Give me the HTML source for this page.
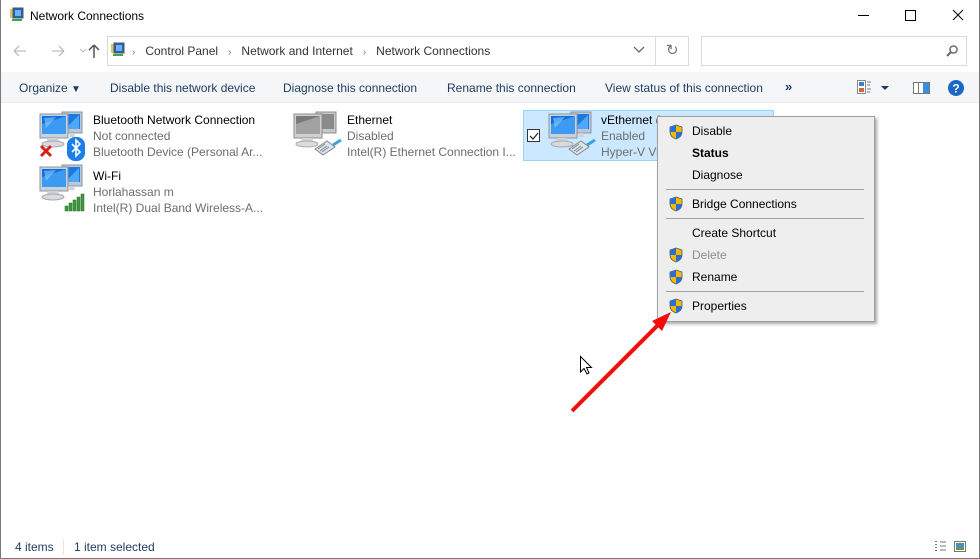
<!DOCTYPE html>
<html><head><meta charset="utf-8"><style>
*{margin:0;padding:0;box-sizing:border-box}
body{width:980px;height:559px;overflow:hidden;background:#fff;font-family:"Segoe UI","Liberation Sans",sans-serif;font-size:12px;color:#000;position:relative}
.a{position:absolute;white-space:nowrap}
.g{color:#6d6d6d}
.menu{position:absolute;left:657px;top:116px;width:218px;height:206px;background:#eeeeee;border:1px solid #a0a0a0;box-shadow:2px 2px 3px rgba(0,0,0,.35)}
.mi{position:absolute;left:34px;font-size:12px}
.sep{position:absolute;left:8px;right:10px;height:1px;background:#a0a0a0}
.sh{position:absolute;left:10px}
</style></head><body>
<svg width="0" height="0" style="position:absolute"><defs>
<symbol id="mon" viewBox="0 0 48 48">
<rect x="24" y="2" width="20" height="21" fill="#bcc8d6" stroke="#8a96a4"/>
<rect x="26" y="4" width="16" height="15" fill="#1a7ae0"/>
<path d="M27 19 L41 5 L41 19Z" fill="#4ea8f5"/>
<rect x="2" y="4" width="28" height="24" fill="#c9d2dc" stroke="#8a96a4"/>
<rect x="4" y="6" width="24" height="18" fill="#0d6fdd"/>
<path d="M4 24 L4 14 Q16 10 28 6 L28 24Z" fill="#3c9af0"/>
<path d="M6 8 L18 7 L8 18Z" fill="#8ecbff" opacity=".6"/>
<path d="M10 28 L20 28 L22 33 L8 33Z" fill="#cfd3d8"/>
<ellipse cx="15" cy="34" rx="11" ry="3" fill="#d8dadd" stroke="#a6a9ad"/>
<path d="M32 23 L36 23 L37 27 L31 27Z" fill="#cfd3d8"/>
</symbol>
<symbol id="mong" viewBox="0 0 48 48">
<rect x="24" y="2" width="20" height="21" fill="#c8c8c8" stroke="#8c8c8c"/>
<rect x="26" y="4" width="16" height="15" fill="#8a8a8a"/>
<rect x="2" y="4" width="28" height="24" fill="#d0d0d0" stroke="#8c8c8c"/>
<rect x="4" y="6" width="24" height="18" fill="#7a7a7a"/>
<path d="M4 24 L4 14 Q16 10 28 6 L28 24Z" fill="#a2a2a2"/>
<path d="M10 28 L20 28 L22 33 L8 33Z" fill="#d3d3d3"/>
<ellipse cx="15" cy="34" rx="11" ry="3" fill="#dcdcdc" stroke="#aaa"/>
</symbol>
<symbol id="plug" viewBox="0 0 30 20">
<path d="M2 12 L14 4 L22 10 L10 18Z" fill="#dfe4e8" stroke="#7f8a93"/>
<path d="M5 12 L12 7 M7 14 L14 9 M9 15 L16 10" stroke="#7f8a93"/>
<path d="M20 8 L28 3" stroke="#3aa3e0" stroke-width="3"/>
</symbol>
<symbol id="shield" viewBox="0 0 16 16">
<path d="M8 1 L14 3 L14 8 Q14 13 8 15 Q2 13 2 8 L2 3Z" fill="#f5b800" stroke="#4a5a6a" stroke-width=".8"/>
<path d="M8 1 L8 8 L2 8 L2 3Z" fill="#2d6fd1"/>
<path d="M8 8 L14 8 Q14 13 8 15Z" fill="#2d6fd1"/>
</symbol>
</defs></svg>

<!-- title bar -->
<svg class="a" style="left:9px;top:7px" width="16" height="16" viewBox="0 0 16 16"><rect x="1" y="2" width="9" height="9" fill="#e8c35a"/><rect x="4" y="1" width="10" height="10" fill="#1b62c4" stroke="#555"/><rect x="6" y="3" width="6" height="6" fill="#6fb0f0"/><rect x="3" y="12" width="10" height="2" fill="#3aa84a"/></svg>
<div class="a" style="left:30px;top:9px;font-size:12px">Network Connections</div>
<svg class="a" style="left:858px;top:8px" width="110" height="16"><path d="M0 7.5 H11" stroke="#000"/><rect x="47.5" y="2.5" width="10" height="10" fill="none" stroke="#000"/><path d="M95 2 L105 12 M105 2 L95 12" stroke="#000"/></svg>

<!-- nav -->
<svg class="a" style="left:10px;top:42px" width="95" height="18"><path d="M4 9 H16 M4 9 L9 4 M4 9 L9 14" stroke="#bdbdbd" stroke-width="1.3" fill="none"/><path d="M42 9 H54 M54 9 L49 4 M54 9 L49 14" stroke="#bdbdbd" stroke-width="1.3" fill="none"/><path d="M70 7 L73 10 L76 7" stroke="#bdbdbd" fill="none"/><path d="M84 16 V3 M84 3 L79 8 M84 3 L89 8" stroke="#555" stroke-width="1.5" fill="none"/></svg>
<div class="a" style="left:107px;top:36px;width:582px;height:30px;border:1px solid #d9d9d9"></div>
<div class="a" style="left:655px;top:36px;width:1px;height:30px;background:#d9d9d9"></div>
<svg class="a" style="left:110px;top:42px" width="16" height="16" viewBox="0 0 16 16"><rect x="1" y="2" width="9" height="9" fill="#e8c35a"/><rect x="4" y="1" width="10" height="10" fill="#1b62c4" stroke="#555"/><rect x="6" y="3" width="6" height="6" fill="#6fb0f0"/><rect x="3" y="12" width="10" height="2" fill="#3aa84a"/></svg>
<div class="a" style="left:132px;top:44px;font-size:12px;color:#333"><span style="color:#777;font-size:10px">›</span>&nbsp;&nbsp;&nbsp;Control Panel&nbsp;&nbsp;&nbsp;<span style="color:#777;font-size:10px">›</span>&nbsp;&nbsp;&nbsp;Network and Internet&nbsp;&nbsp;&nbsp;<span style="color:#777;font-size:10px">›</span>&nbsp;&nbsp;&nbsp;Network Connections</div>
<svg class="a" style="left:633px;top:46px" width="12" height="8"><path d="M1 1 L6 6 L11 1" stroke="#666" stroke-width="1.3" fill="none"/></svg>
<div class="a" style="left:666px;top:41px;font-size:15px;color:#777">↻</div>
<div class="a" style="left:701px;top:36px;width:266px;height:30px;border:1px solid #d9d9d9"></div>
<svg class="a" style="left:945px;top:44px" width="14" height="14"><circle cx="8.5" cy="5.5" r="3.6" stroke="#666" stroke-width="1.4" fill="none"/><path d="M6 8 L2 12" stroke="#666" stroke-width="2"/></svg>

<!-- toolbar -->
<div class="a" style="left:1px;top:72px;width:978px;height:31px;background:#f4f6f8;border-bottom:1px solid #e8ebee"></div>
<div class="a" style="left:19px;top:81px;color:#1e3a5f">Organize <span style="font-size:10px">▼</span></div>
<div class="a" style="left:110px;top:81px;color:#1e3a5f">Disable this network device</div>
<div class="a" style="left:283px;top:81px;color:#1e3a5f">Diagnose this connection</div>
<div class="a" style="left:447px;top:81px;color:#1e3a5f">Rename this connection</div>
<div class="a" style="left:605px;top:81px;color:#1e3a5f">View status of this connection</div>
<div class="a" style="left:785px;top:79px;color:#1e3a5f;font-size:13px;font-weight:bold">»</div>
<svg class="a" style="left:856px;top:79px" width="110" height="18"><rect x="1.5" y="1.5" width="8" height="13" fill="#fff" stroke="#888"/><rect x="3" y="3" width="5" height="4" fill="#3a7fc8"/><rect x="3" y="9" width="5" height="4" fill="#c86a3a"/><path d="M11 3H15M11 6H14M11 10H15M11 13H14" stroke="#777"/><path d="M25 7 L33 7 L29 11Z" fill="#1e3a5f"/><rect x="57.5" y="3.5" width="16" height="11" fill="#fff" stroke="#777"/><rect x="67" y="4" width="6" height="10" fill="#3a90e0"/><path d="M62.5 4 V14" stroke="#777"/><circle cx="100" cy="9" r="8" fill="#1a67c8"/><text x="100" y="13.5" text-anchor="middle" font-family="Liberation Sans" font-weight="bold" font-size="12" fill="#fff">?</text></svg>

<!-- items -->
<svg class="a" style="left:38px;top:110px" width="48" height="48"><use href="#mon"/></svg>
<svg class="a" style="left:38px;top:143px" width="16" height="16"><path d="M3 3 L13 13 M13 3 L3 13" stroke="#d8201b" stroke-width="3"/></svg>
<svg class="a" style="left:67px;top:137px" width="18" height="24"><rect x="0" y="0" width="18" height="24" rx="8" fill="#1a7fe8"/><path d="M5 7 L13 15 L9 19 V3 L13 7 L5 15" stroke="#fff" stroke-width="1.6" fill="none"/></svg>
<div class="a" style="left:93px;top:113px">Bluetooth Network Connection</div>
<div class="a g" style="left:93px;top:129px">Not connected</div>
<div class="a g" style="left:93px;top:145px">Bluetooth Device (Personal Ar...</div>

<svg class="a" style="left:292px;top:110px" width="48" height="48"><use href="#mong"/></svg>
<svg class="a" style="left:313px;top:137px" width="30" height="20"><use href="#plug"/></svg>
<div class="a" style="left:347px;top:113px">Ethernet</div>
<div class="a g" style="left:347px;top:129px">Disabled</div>
<div class="a g" style="left:347px;top:145px">Intel(R) Ethernet Connection I...</div>

<div class="a" style="left:523px;top:110px;width:251px;height:51px;background:#cce8ff;border:1px solid #99d1ff"></div>
<div class="a" style="left:527px;top:129px;width:13px;height:13px;border:1px solid #333;background:#fff"></div>
<svg class="a" style="left:528px;top:130px" width="12" height="12"><path d="M2 6 L5 9 L10 3" stroke="#333" stroke-width="1.3" fill="none"/></svg>
<svg class="a" style="left:547px;top:110px" width="48" height="48"><use href="#mon"/></svg>
<svg class="a" style="left:567px;top:137px" width="30" height="20"><use href="#plug"/></svg>
<div class="a" style="left:601px;top:113px">vEthernet (</div>
<div class="a g" style="left:601px;top:129px">Enabled</div>
<div class="a g" style="left:601px;top:145px">Hyper-V Vi</div>

<svg class="a" style="left:38px;top:163px" width="48" height="48"><use href="#mon"/></svg>
<svg class="a" style="left:64px;top:192px" width="24" height="20"><g fill="#3e9a3e" stroke="#2a6a2a" stroke-width=".5"><rect x="1" y="14" width="3" height="5"/><rect x="5" y="11" width="3" height="8"/><rect x="9" y="8" width="3" height="11"/><rect x="13" y="5" width="3" height="14"/><rect x="17" y="2" width="3" height="17"/></g></svg>
<div class="a" style="left:93px;top:169px">Wi-Fi</div>
<div class="a g" style="left:93px;top:185px">Horlahassan m</div>
<div class="a g" style="left:93px;top:201px">Intel(R) Dual Band Wireless-A...</div>

<!-- menu -->
<div class="menu">
<svg class="sh" style="top:7px" width="16" height="16"><use href="#shield"/></svg>
<div class="mi" style="top:7px">Disable</div>
<div class="mi" style="top:29px;font-weight:bold">Status</div>
<div class="mi" style="top:51px">Diagnose</div>
<div class="sep" style="top:72px"></div>
<svg class="sh" style="top:79px" width="16" height="16"><use href="#shield"/></svg>
<div class="mi" style="top:80px">Bridge Connections</div>
<div class="sep" style="top:101px"></div>
<div class="mi" style="top:109px">Create Shortcut</div>
<svg class="sh" style="top:130px" width="16" height="16"><use href="#shield"/></svg>
<div class="mi" style="top:131px;color:#8d8d8d">Delete</div>
<svg class="sh" style="top:152px" width="16" height="16"><use href="#shield"/></svg>
<div class="mi" style="top:153px">Rename</div>
<div class="sep" style="top:174px"></div>
<svg class="sh" style="top:181px" width="16" height="16"><use href="#shield"/></svg>
<div class="mi" style="top:182px">Properties</div>
</div>

<!-- arrow + cursor -->
<svg class="a" style="left:0;top:0" width="980" height="559">
<path d="M572 411 L660 323" stroke="#f40c0c" stroke-width="4"/>
<path d="M671 312 L652 321 L662 331Z" fill="#f40c0c"/>
<path d="M580.5 356.5 V372 L584 368.5 L587 374 L589 373 L586.5 367.5 L591.5 367.5Z" fill="#fff" stroke="#000"/>
</svg>

<!-- status bar -->
<div class="a" style="left:15px;top:540px;color:#1e3a5f">4 items</div>
<div class="a" style="left:63px;top:539px;width:1px;height:16px;background:#e6e6e6"></div>
<div class="a" style="left:74px;top:540px;color:#1e3a5f">1 item selected</div>
<svg class="a" style="left:934px;top:540px" width="36" height="14"><path d="M1 1.5H3M1 4.5H3M1 7.5H3M1 10.5H3M6 2H12M6 6H12M6 10H12" stroke="#777"/><rect x="20.5" y="1.5" width="11" height="10" fill="#fff" stroke="#777"/><rect x="22" y="3" width="8" height="7" fill="#4b8cc8"/><rect x="22" y="7" width="8" height="3" fill="#5a9a5a"/></svg>

<!-- window border -->
<div class="a" style="left:0;top:0;width:980px;height:559px;border:1px solid #7a7a7a;border-top:none"></div>
</body></html>
